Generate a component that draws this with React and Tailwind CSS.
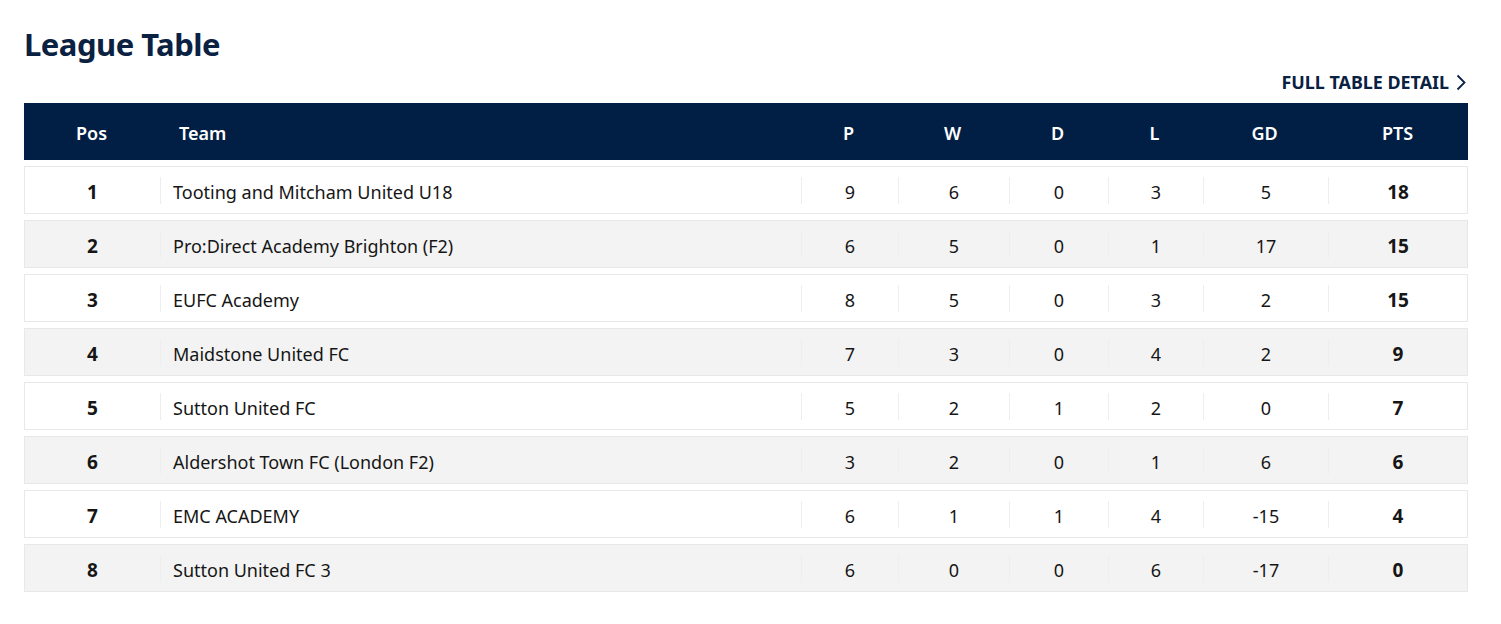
const teams = [
  { pos: 1, name: 'Tooting and Mitcham United U18', p: 9, w: 6, d: 0, l: 3, gd: 5, pts: 18 },
  { pos: 2, name: 'Pro:Direct Academy Brighton (F2)', p: 6, w: 5, d: 0, l: 1, gd: 17, pts: 15 },
  { pos: 3, name: 'EUFC Academy', p: 8, w: 5, d: 0, l: 3, gd: 2, pts: 15 },
  { pos: 4, name: 'Maidstone United FC', p: 7, w: 3, d: 0, l: 4, gd: 2, pts: 9 },
  { pos: 5, name: 'Sutton United FC', p: 5, w: 2, d: 1, l: 2, gd: 0, pts: 7 },
  { pos: 6, name: 'Aldershot Town FC (London F2)', p: 3, w: 2, d: 0, l: 1, gd: 6, pts: 6 },
  { pos: 7, name: 'EMC ACADEMY', p: 6, w: 1, d: 1, l: 4, gd: -15, pts: 4 },
  { pos: 8, name: 'Sutton United FC 3', p: 6, w: 0, d: 0, l: 6, gd: -17, pts: 0 },
];

const cols = 'grid grid-cols-[135px_641px_97px_111px_99px_95px_125px_1fr]';

function Cell({ children, className = '' }) {
  return (
    <div className={`flex h-full items-center ${className}`}>
      <span className="h-[27px] w-px bg-[#eeeeee]" />
      <div className="flex-1 pt-[4px] text-center">{children}</div>
    </div>
  );
}

export default function App() {
  return (
    <div className="bg-white pl-6 pr-[33px] pt-6 pb-8 font-['Noto_Sans',sans-serif] text-[#161616]">
      <h1 className="text-[31px] font-bold leading-10 tracking-[-0.5px] text-[#0a2142]">League Table</h1>

      <div className="mt-[6px] flex justify-end pr-[2px]">
        <a className="flex items-center gap-[7px] text-[17.9px] font-bold leading-6 text-[#0a2142]">
          FULL TABLE DETAIL
          <svg width="10" height="17" viewBox="0 0 10 17" fill="none" stroke="currentColor" strokeWidth="1.8">
            <polyline points="1.5,1.5 8.5,8.5 1.5,15.5" />
          </svg>
        </a>
      </div>

      <div className="mt-[9px]">
        {/* header */}
        <div className={`${cols} h-[57px] items-center bg-[#011f45] pt-[4px] text-[18px] font-semibold text-white`}>
          <div className="text-center">Pos</div>
          <div className="pl-5">Team</div>
          <div className="text-center">P</div>
          <div className="text-center">W</div>
          <div className="text-center">D</div>
          <div className="text-center">L</div>
          <div className="text-center">GD</div>
          <div className="text-center">PTS</div>
        </div>

        {/* rows */}
        <div className="mt-[6px] flex flex-col gap-[6px]">
          {teams.map((t) => (
            <div
              key={t.pos}
              className={`${cols} h-[48px] items-center border border-[#e8e8e8] text-[18px] ${
                t.pos % 2 === 0 ? 'bg-[#f3f3f3]' : 'bg-white'
              }`}
            >
              <div className="pt-[4px] text-center text-[19px] font-bold">{t.pos}</div>
              <div className="flex h-full items-center">
                <span className="h-[27px] w-px bg-[#eeeeee]" />
                <span className="pl-[12px] pt-[4px]">{t.name}</span>
              </div>
              <Cell>{t.p}</Cell>
              <Cell>{t.w}</Cell>
              <Cell>{t.d}</Cell>
              <Cell>{t.l}</Cell>
              <Cell>{t.gd}</Cell>
              <Cell className="text-[19px] font-bold">{t.pts}</Cell>
            </div>
          ))}
        </div>
      </div>
    </div>
  );
}
